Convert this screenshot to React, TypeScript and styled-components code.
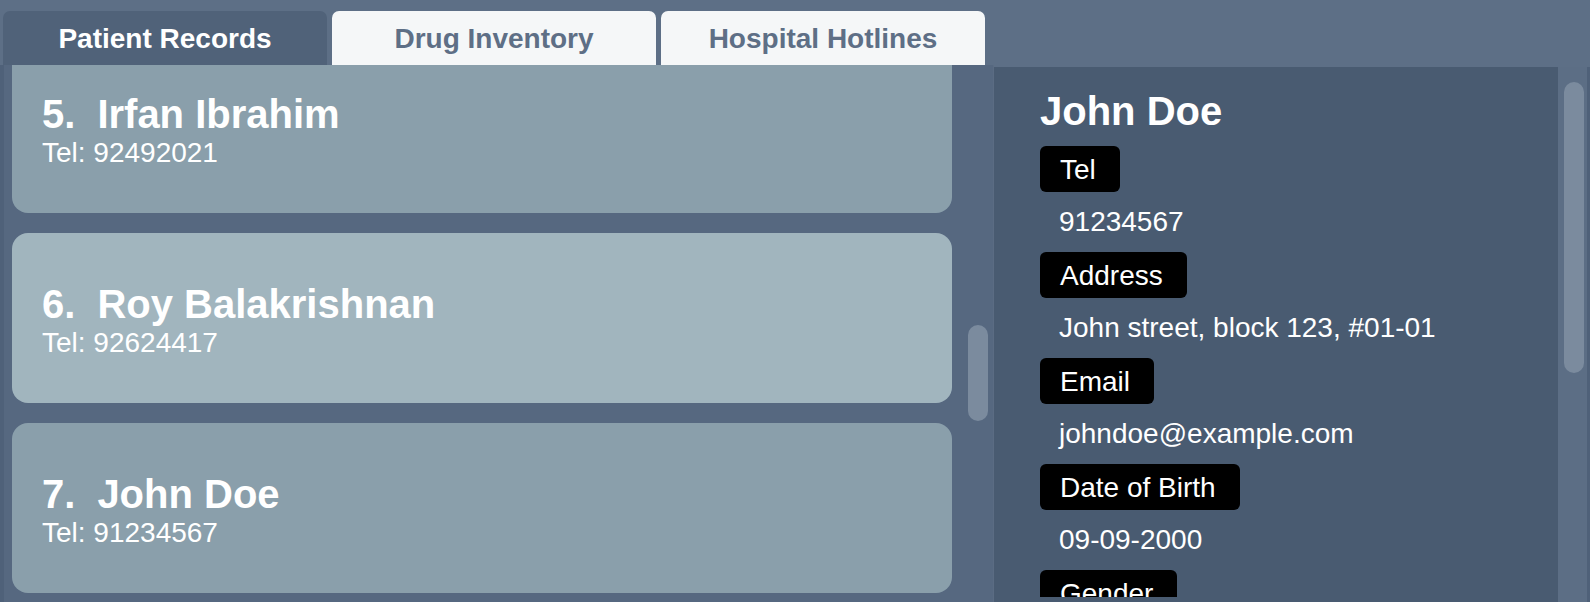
import React from "react";
import styled, { createGlobalStyle } from "styled-components";

const GlobalStyle = createGlobalStyle`
  html, body { margin: 0; padding: 0; }
  body {
    font-family: "Liberation Sans", Arial, sans-serif;
    background: #5d6f86;
    overflow: hidden;
  }
`;

const Window = styled.div`
  width: 1590px;
  height: 602px;
  display: flex;
  flex-direction: column;
  background: #5d6f86;
  overflow: hidden;
`;

const TabBar = styled.div`
  height: 65px;
  box-sizing: border-box;
  padding: 11px 0 0 3px;
  display: flex;
  gap: 5px;
  flex-shrink: 0;
`;

const Tab = styled.div<{ $active?: boolean }>`
  width: 324px;
  height: 54px;
  box-sizing: border-box;
  border-radius: 7px 7px 0 0;
  background: ${(p) => (p.$active ? "#506279" : "#f5f7f8")};
  color: ${(p) => (p.$active ? "#ffffff" : "#5e6f86")};
  font-weight: bold;
  font-size: 28px;
  display: flex;
  align-items: center;
  justify-content: center;
  padding-top: 1px;
`;

const Body = styled.div`
  flex: 1;
  display: flex;
  min-height: 0;
`;

const ListPane = styled.div`
  width: 989px;
  border-left: 4px solid #4f6179;
  border-right: 1px solid #5b6c83;
  background: #566880;
  display: flex;
  overflow: hidden;
`;

const ListViewport = styled.div`
  width: 948px;
  padding-left: 8px;
  overflow: hidden;
`;

const ListContent = styled.div`
  display: flex;
  flex-direction: column;
  gap: 20px;
`;

const Card = styled.div<{ $alt?: boolean }>`
  height: 170px;
  box-sizing: border-box;
  border-radius: 16px;
  background: ${(p) => (p.$alt ? "#a1b5be" : "#8a9fab")};
  padding: 3px 0 0 30px;
  display: flex;
  flex-direction: column;
  justify-content: center;
  color: #ffffff;
`;

const CardTitle = styled.div`
  display: flex;
  gap: 22px;
  font-size: 40px;
  font-weight: bold;
  line-height: 46px;
`;

const CardTel = styled.div`
  font-size: 28px;
  line-height: 32px;
`;

const ListScrollTrack = styled.div`
  width: 41px;
  display: flex;
  justify-content: center;
  padding-left: 12px;
  box-sizing: border-box;
  padding-right: 1px;
`;

const Thumb = styled.div`
  width: 20px;
  border-radius: 10px;
  background: #7b8b9e;
`;

const ListThumb = styled(Thumb)`
  height: 96px;
  margin-top: 260px;
`;

const DetailPane = styled.div`
  flex: 1;
  display: flex;
  margin-top: 2px;
  border-right: 3px solid #4f6179;
`;

const DetailPanel = styled.div`
  width: 564px;
  background: #495b71;
  padding-bottom: 5px;
  box-sizing: border-box;
  display: flex;
  flex-direction: column;
`;

const DetailViewport = styled.div`
  flex: 1;
  overflow: hidden;
  padding: 21px 0 0 46px;
  color: #ffffff;
`;

const DetailName = styled.div`
  font-size: 40px;
  font-weight: bold;
  line-height: 46px;
  margin-bottom: 12px;
`;

const Field = styled.div`
  display: flex;
  flex-direction: column;
  align-items: flex-start;
`;

const Label = styled.div`
  background: #000000;
  border-radius: 6px;
  padding: 1px 24px 0 20px;
  height: 46px;
  box-sizing: border-box;
  line-height: 46px;
  font-size: 28px;
  color: #ffffff;
`;

const Value = styled.div`
  height: 60px;
  line-height: 60px;
  font-size: 28px;
  padding-left: 19px;
  color: #ffffff;
`;

const DetailScrollTrack = styled.div`
  width: 29px;
  background: #5c6e85;
  display: flex;
  padding-left: 6px;
  box-sizing: border-box;
`;

const DetailThumb = styled(Thumb)`
  height: 291px;
  margin-top: 15px;
`;

const patients = [
  { id: 5, name: "Irfan Ibrahim", tel: "92492021" },
  { id: 6, name: "Roy Balakrishnan", tel: "92624417", alt: true },
  { id: 7, name: "John Doe", tel: "91234567" },
];

const fields = [
  { label: "Tel", value: "91234567" },
  { label: "Address", value: "John street, block 123, #01-01" },
  { label: "Email", value: "johndoe@example.com" },
  { label: "Date of Birth", value: "09-09-2000" },
  { label: "Gender", value: "Male" },
];

const scrollOffset = 22;

export default function App() {
  return (
    <>
      <GlobalStyle />
      <Window>
        <TabBar>
          <Tab $active>Patient Records</Tab>
          <Tab>Drug Inventory</Tab>
          <Tab>Hospital Hotlines</Tab>
        </TabBar>
        <Body>
          <ListPane>
            <ListViewport>
              <ListContent style={{ marginTop: -scrollOffset }}>
                {patients.map((p) => (
                  <Card key={p.id} $alt={p.alt}>
                    <CardTitle>
                      <span>{p.id}.</span>
                      <span>{p.name}</span>
                    </CardTitle>
                    <CardTel>Tel: {p.tel}</CardTel>
                  </Card>
                ))}
              </ListContent>
            </ListViewport>
            <ListScrollTrack>
              <ListThumb />
            </ListScrollTrack>
          </ListPane>
          <DetailPane>
            <DetailPanel>
              <DetailViewport>
                <DetailName>John Doe</DetailName>
                {fields.map((f) => (
                  <Field key={f.label}>
                    <Label>{f.label}</Label>
                    <Value>{f.value}</Value>
                  </Field>
                ))}
              </DetailViewport>
            </DetailPanel>
            <DetailScrollTrack>
              <DetailThumb />
            </DetailScrollTrack>
          </DetailPane>
        </Body>
      </Window>
    </>
  );
}
